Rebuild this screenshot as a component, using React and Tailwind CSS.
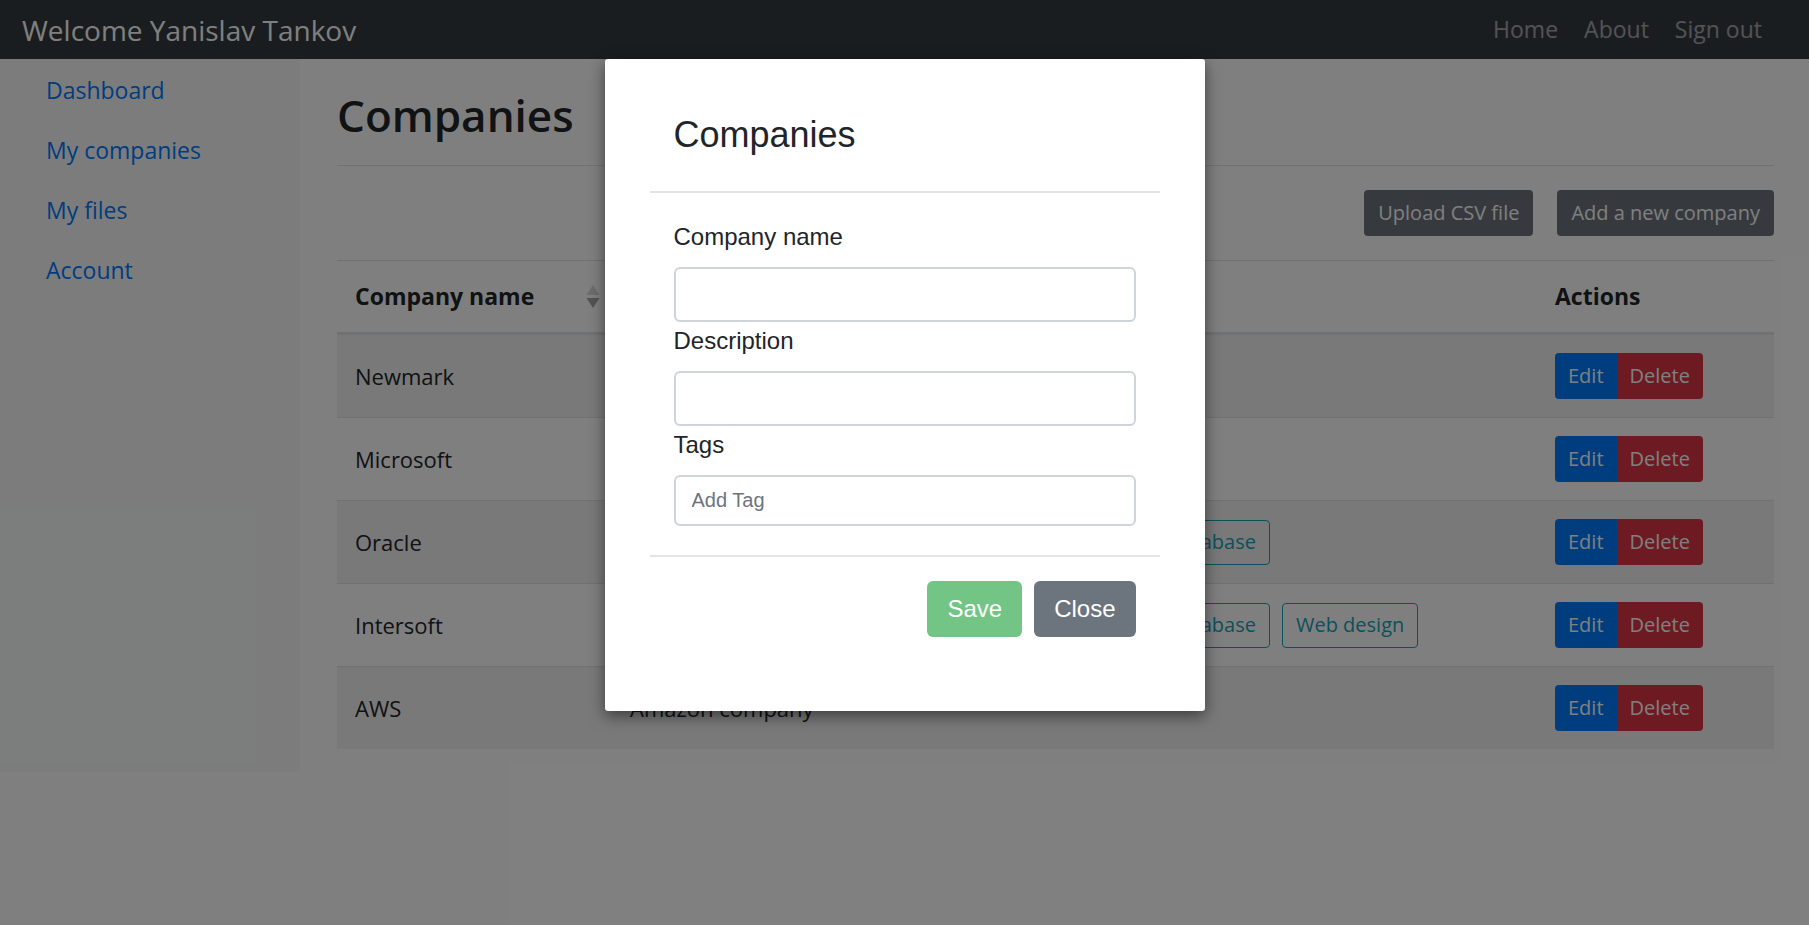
import React from 'react';

const companies = [
  { name: 'Newmark', description: 'Real estate', tags: [] },
  { name: 'Microsoft', description: 'Software company', tags: [] },
  { name: 'Oracle', description: 'Software company', tags: ['Database'] },
  { name: 'Intersoft', description: 'Software company', tags: ['Database', 'Web design'] },
  { name: 'AWS', description: 'Amazon company', tags: [] },
];

const cols = 'grid grid-cols-[275px_524px_401px_1fr]';

const SortIcon = () => (
  <svg width="14" height="24" viewBox="0 0 14 24">
    <polygon points="7,0 13.5,10 0.5,10" fill="#d8d8d8" />
    <polygon points="0.5,13 13.5,13 7,23" fill="#a6a6a6" />
  </svg>
);

const Navbar = () => (
  <div className="h-[59px] bg-[#343a40] flex items-center justify-between pl-[22px] pr-[47px]">
    <span className="text-white text-[28px]">Welcome Yanislav Tankov</span>
    <div className="flex gap-[26px] text-[23px] text-white/55">
      <a>Home</a>
      <a>About</a>
      <a>Sign out</a>
    </div>
  </div>
);

const Sidebar = () => (
  <div className="w-[300px] h-[713px] shrink-0 bg-[#f8f9fa] pt-px">
    {['Dashboard', 'My companies', 'My files', 'Account'].map((item) => (
      <div key={item} className="h-[60px] flex items-center pl-[46px] text-[23px] text-[#007bff]">
        {item}
      </div>
    ))}
  </div>
);

const CompaniesTable = () => (
  <div className="border-t border-[#dee2e6] text-[#212529]">
    <div className={`${cols} h-[74px] items-center font-bold text-[23px] border-b-[3px] border-[#dee2e6]`}>
      <div className="flex items-center justify-between pl-[18px] pr-[12px]">
        <span>Company name</span>
        <SortIcon />
      </div>
      <div className="pl-[18px]">Description</div>
      <div className="pl-[18px]">Tags</div>
      <div className="pl-[18px]">Actions</div>
    </div>
    {companies.map((c, i) => (
      <div
        key={c.name}
        className={`${cols} items-center text-[22px] ${i > 0 ? 'h-[83px] border-t border-[#dee2e6]' : 'h-[82px]'} ${
          i % 2 === 0 ? 'bg-black/5' : ''
        }`}
      >
        <div className="pl-[18px]">{c.name}</div>
        <div className="pl-[18px]">{c.description}</div>
        <div className="pl-[18px] flex gap-[12px]">
          {c.tags.map((t) => (
            <span
              key={t}
              className="h-[45px] px-[13px] flex items-center border border-[#17a2b8] text-[#17a2b8] rounded-[4px] text-[20px]"
            >
              {t}
            </span>
          ))}
        </div>
        <div className="pl-[18px] flex">
          <button className="h-[46px] px-[13px] bg-[#007bff] text-white text-[20px] rounded-l-[4px]">Edit</button>
          <button className="h-[46px] px-[13px] bg-[#dc3545] text-white text-[20px] rounded-r-[4px]">Delete</button>
        </div>
      </div>
    ))}
  </div>
);

const Field = ({ label, placeholder, tall = true, first = false }) => (
  <div className={first ? '' : 'mt-[5px]'}>
    <div className="h-[28px] leading-[28px] text-[24px] text-[#212529]">{label}</div>
    <input
      placeholder={placeholder}
      className={`mt-[16px] w-full ${tall ? 'h-[55px]' : 'h-[51px]'} border-2 border-[#ced4da] rounded-[6px] px-[16px] text-[20px] placeholder:text-[#6c757d] outline-none`}
    />
  </div>
);

const Modal = () => (
  <div className="w-[600px] h-[652px] bg-white rounded-[3px] shadow-[0_5px_15px_rgba(0,0,0,0.5)] px-[45px] pt-[54px] font-['Liberation_Sans',Arial,sans-serif]">
    <div className="px-[24px] h-[43px] leading-[43px] text-[36px] text-[#212529]">Companies</div>
    <div className="mt-[35px] h-[2px] bg-[#e3e3e3]" />
    <div className="px-[24px] pt-[30px]">
      <Field label="Company name" first />
      <Field label="Description" />
      <Field label="Tags" placeholder="Add Tag" tall={false} />
    </div>
    <div className="mt-[29px] h-[2px] bg-[#e3e3e3]" />
    <div className="px-[24px] pt-[24px] flex justify-end gap-[12px] text-[24px] text-white">
      <button className="h-[56px] px-[20px] rounded-[6px] bg-[#73c586]">Save</button>
      <button className="h-[56px] px-[20px] rounded-[6px] bg-[#6c757d]">Close</button>
    </div>
  </div>
);

export default function App() {
  return (
    <div className="relative h-[925px] bg-white overflow-hidden font-['Open_Sans',sans-serif]">
      <Navbar />
      <div className="flex">
        <Sidebar />
        <div className="flex-1 pl-[37px] pr-[35px]">
          <h1 className="mt-[29px] h-[55px] leading-[55px] text-[44px] font-semibold text-[#212529]">Companies</h1>
          <div className="mt-[22px] h-px bg-black/10" />
          <div className="mt-[24px] flex justify-end gap-[24px]">
            <button className="h-[46px] px-[14px] bg-[#6c757d] text-white text-[20px] rounded-[4px]">Upload CSV file</button>
            <button className="h-[46px] px-[14px] bg-[#6c757d] text-white text-[20px] rounded-[4px]">Add a new company</button>
          </div>
          <div className="mt-[24px]">
            <CompaniesTable />
          </div>
        </div>
      </div>

      {/* modal backdrop */}
      <div className="absolute inset-0 bg-black/50 flex justify-center items-start pt-[59px]">
        <Modal />
      </div>
    </div>
  );
}
